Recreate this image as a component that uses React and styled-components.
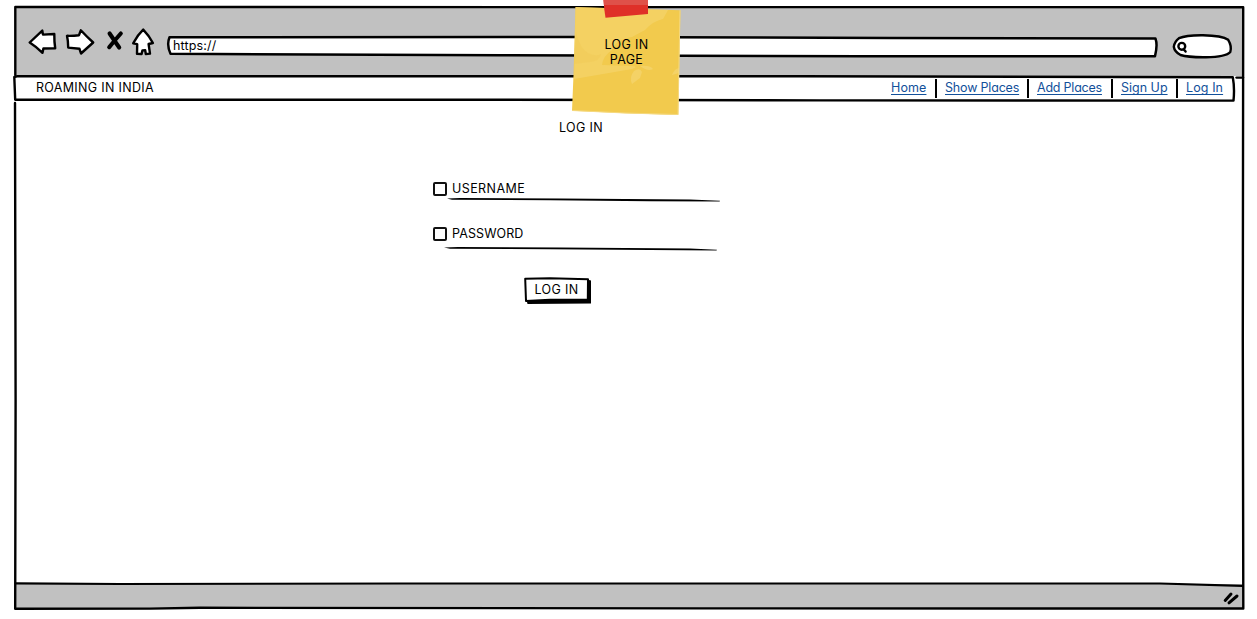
import React from "react";
import styled, { createGlobalStyle } from "styled-components";

const GlobalStyle = createGlobalStyle`
  * { box-sizing: border-box; }
  body {
    margin: 0;
    background: #fff;
    color: #000;
    font-family: Inter, "Open Sans", sans-serif;
    font-size: 12.5px;
    line-height: 15px;
    font-feature-settings: "cv11" 1;
    overflow: hidden;
  }
`;

const Page = styled.div`
  height: 619px;
  padding: 6px 13px 10px 14px;
`;

const BrowserWindow = styled.div`
  position: relative;
  display: flex;
  flex-direction: column;
  height: 603px;
`;

/* Hand-drawn pen strokes laid over the panel that owns them. */
const Ink = styled.svg`
  position: absolute;
  inset: 0;
  width: 100%;
  height: 100%;
  overflow: visible;
  pointer-events: none;
  fill: none;
  stroke: #000;
  stroke-width: ${(p) => p.$pen || 2.4};
  stroke-linecap: round;
  stroke-linejoin: round;
`;

const Toolbar = styled.header`
  display: flex;
  align-items: flex-start;
  height: 70px;
  margin: 0 1px;
  padding: 22px 11px 0 13px;
  background: #c1c1c1;
`;

const ToolIcon = styled.svg`
  flex: none;
  width: ${(p) => p.$w}px;
  height: 30px;
  margin-right: ${(p) => p.$gap}px;
  overflow: visible;
  fill: #fff;
  stroke: #000;
  stroke-width: 2.4;
  stroke-linejoin: round;
  stroke-linecap: round;
`;

const AddressBar = styled.div`
  position: relative;
  flex: none;
  width: 990px;
  height: 20px;
  margin-top: 8px;
  padding: 2px 0 0 6px;
`;

const AddressText = styled.span`
  position: relative;
  letter-spacing: ${(p) => p.$track || 0}px;
`;

const SearchBox = styled.div`
  position: relative;
  flex: none;
  width: 60px;
  height: 24px;
  margin: 6px 0 0 15px;
`;

const NavBar = styled.nav`
  position: relative;
  display: flex;
  justify-content: space-between;
  width: 1219px;
  height: 25px;
  padding: 4px 0 0 22px;
  background: #fff;
`;

const Label = styled.span`
  white-space: nowrap;
  letter-spacing: ${(p) => p.$track || 0}px;
`;

const NavLinks = styled.div`
  display: flex;
  margin-top: -1px;
`;

const NavItem = styled.div`
  width: ${(p) => p.$w}px;
  height: 19px;
  padding: 1px 0 0 8px;
  border-left: ${(p) => (p.$first ? "0" : "2px solid #000")};
`;

const NavLink = styled.a`
  color: #12509a;
  white-space: nowrap;
  letter-spacing: ${(p) => p.$track || 0}px;
  text-decoration: underline;
  text-decoration-thickness: 1px;
  text-underline-offset: 2px;
  text-decoration-skip-ink: none;
`;

const Content = styled.main`
  flex: 1;
  padding: 19px 0 0 419px;
`;

const Heading = styled.h1`
  margin: 0 0 46px 126px;
  font-size: 12.5px;
  font-weight: 400;
  line-height: 15px;
  letter-spacing: ${(p) => p.$track || 0}px;
`;

const Field = styled.label`
  position: relative;
  display: flex;
  align-items: center;
  gap: 5px;
  width: 290px;
  height: 15px;
  margin-bottom: 30px;
`;

const CheckBox = styled.span`
  width: 14px;
  height: 14px;
  border: 2px solid #111;
  border-radius: 2px;
`;

const LoginButton = styled.button`
  position: relative;
  display: block;
  width: 67px;
  height: 26px;
  margin: 36px 0 0 91px;
  padding: 0 0 1px;
  border: 0;
  background: none;
  font: inherit;
  font-feature-settings: inherit;
  color: #000;
`;

const ButtonText = styled.span`
  position: relative;
  left: -1px;
  letter-spacing: ${(p) => p.$track || 0}px;
`;

const StatusBar = styled.footer`
  height: 25px;
  margin: 0 1px;
  background: #c1c1c1;
`;

const StickyNote = styled.aside`
  position: absolute;
  left: 558px;
  top: -6px;
  width: 110px;
  height: 122px;
  padding-top: 37px;
  text-align: center;
`;

const NotePaper = styled.svg`
  position: absolute;
  inset: 0;
  width: 110px;
  height: 122px;
`;

const NoteLine = styled.div`
  position: relative;
  left: -0.5px;
  letter-spacing: ${(p) => p.$track || 0}px;
`;

const links = [
  { text: "Home", w: 52, track: 0.1 },
  { text: "Show Places", w: 92, track: -0.18 },
  { text: "Add Places", w: 84, track: -0.22 },
  { text: "Sign Up", w: 65, track: 0 },
  { text: "Log In", w: 57, track: 0.1 },
];

export default function App() {
  return (
    <>
      <GlobalStyle />
      <Page>
        <BrowserWindow>
          <Toolbar>
            <ToolIcon $w={28} $gap={9} viewBox="28 28 28 30">
              <path d="M29.7 42.5L42.3 30.6L43 34.6L54.3 34Q54.2 42 55.2 48.3L43.4 48.5L42.5 52.8Q36 46.5 29.7 42.5Z" />
            </ToolIcon>
            <ToolIcon $w={29} $gap={12} viewBox="65 28 29 30">
              <path d="M67 35.8Q73 36 79 35.2L80.8 30.3Q87 37 93.2 42.5L81 53.5L79.5 48.8L68.2 47.6Q68.2 41 67 35.8Z" />
            </ToolIcon>
            <ToolIcon $w={17} $gap={8} viewBox="106 28 17 30">
              <path d="M109.6 33.5Q115 41.5 119.2 47.5M120.8 33.5Q115 40 109.2 47.2" fill="none" strokeWidth="4.1" />
            </ToolIcon>
            <ToolIcon $w={36} $gap={0} viewBox="131 28 36 30">
              <path d="M143.2 29.6Q149 35.5 152.9 43L148.6 44L150 53.6L145.8 54L145.2 50.3L142.4 50.4L141.6 54L137 53.8L137.2 44.2L133.2 43.3Q137.5 35 143.2 29.6Z" />
            </ToolIcon>
            <AddressBar>
              <Ink viewBox="167 36 990 20" $pen={2.5}>
                <path
                  fill="#fff"
                  d="M169.5 37.2L570 37L890 38L1155.5 38.6Q1157.8 45 1155 56.2L860 56.2L500 55.2L170.5 53.8Q166.4 45 169.5 37.2Z"
                />
              </Ink>
              <AddressText $track={0.15}>https://</AddressText>
            </AddressBar>
            <SearchBox>
              <Ink viewBox="1172 34 60 24" $pen={2.4}>
                <path
                  fill="#fff"
                  d="M1179 38.2Q1186 35 1203 35.2Q1222 35.5 1228.2 39.8Q1232 46 1230.3 52Q1226 57 1206 57.2Q1188 57.4 1180.5 55Q1174.6 52 1173.8 46.8Q1174.5 41.5 1179 38.2Z"
                />
                <circle cx="1181.8" cy="46.3" r="3.4" />
                <path d="M1183.8 49.4L1185.6 51.6" />
              </Ink>
            </SearchBox>
          </Toolbar>
          <NavBar>
            <Label $track={0.32}>ROAMING IN INDIA</Label>
            <NavLinks>
              {links.map((l, i) => (
                <NavItem key={l.text} $w={l.w} $first={i === 0}>
                  <NavLink $track={l.track}>{l.text}</NavLink>
                </NavItem>
              ))}
            </NavLinks>
          </NavBar>
          <Content>
            <Heading $track={0.35}>LOG IN</Heading>
            <Field>
              <CheckBox />
              <Label $track={0.42}>USERNAME</Label>
              <Ink viewBox="433 181 290 15">
                <path fill="#000" stroke="none" d="M447 198.6L460 198L560 198.6L690 199.6L720 200.7L719.6 201.6L650 201.2L550 200.2L452 199.8Z" />
              </Ink>
            </Field>
            <Field>
              <CheckBox />
              <Label $track={0.1}>PASSWORD</Label>
              <Ink viewBox="433 226 290 15">
                <path fill="#000" stroke="none" d="M444 247.4L458 247L560 247.5L690 248.6L717 249.7L716.5 250.6L650 250.1L550 249.3L450 248.8Z" />
              </Ink>
            </Field>
            <LoginButton>
              <Ink viewBox="524 277 67 26">
                <path fill="#000" stroke="none" d="M587 279.5L591 280.5L591 303.5L527.5 304L526.5 300L587 299Z" />
                <path fill="#fff" d="M525.2 278.8L550 278.3L588 279.2L587.8 299.8L550 299.8L526 301Z" strokeWidth="2" />
              </Ink>
              <ButtonText $track={0.35}>LOG IN</ButtonText>
            </LoginButton>
          </Content>
          <StatusBar />
          <Ink viewBox="14 6 1230 603">
            <path d="M15.3 75L15.3 7L1243.2 7.2L1242.8 340L1243.3 608.5L700 608.4L200 607.8L150 608.6L15.2 608.7L15.6 400L15 103" />
            <path d="M15.8 583.4L120 584L400 583.5L1160 583.5L1242.5 585.9" strokeWidth="2.2" />
            <path d="M1236.5 77.6H1243" />
            <path d="M17 76.4L14.3 77L15.2 99.8L500 99.8L820 100.4L1233.5 100.6Q1234.8 88 1232.8 77.2L800 76.3L17 76.3" />
            <path d="M1225.2 600.5L1231 594M1229 602.8L1237 596" strokeWidth="3" />
          </Ink>
          <StickyNote>
            <NotePaper viewBox="572 0 110 122">
              <path d="M575.5 7L605 8L680.4 10.2L678.3 115L625 113.3L572 110.8L573.5 75Z" fill="#f2ca4d" />
              <path d="M575.5 7L668 10L663 19Q653 21 645 30L632 37Q615 40 612 50Q603 56 602 65L630 66Q640 66 632 69L574 79Z" fill="#f5d571" opacity="0.6" />
              <path d="M576 32Q580 49 588 53Q596 57 601 54Q600 61 590 62L574 64Z" fill="#f0cb58" opacity="0.55" />
              <path d="M634 71Q640 67 642 72L640 78L632 84Q629 77 634 71ZM640 66Q650 65 653 69Q648 72 640 66ZM679 73L672 75Q674 69 679 68Z" fill="#f4d266" />
              <path d="M680 10.2L678 114.5L625 113L572 110.5" fill="none" stroke="#f5d980" strokeWidth="1" />
              <path d="M603.5 0H648V14L605.5 17.8Q604 9 603.5 0Z" fill="#df3028" />
              <path d="M603.5 0H648V5H603.9Z" fill="#df5149" />
            </NotePaper>
            <NoteLine $track={0.35}>LOG IN</NoteLine>
            <NoteLine $track={0.3}>PAGE</NoteLine>
          </StickyNote>
        </BrowserWindow>
      </Page>
    </>
  );
}
